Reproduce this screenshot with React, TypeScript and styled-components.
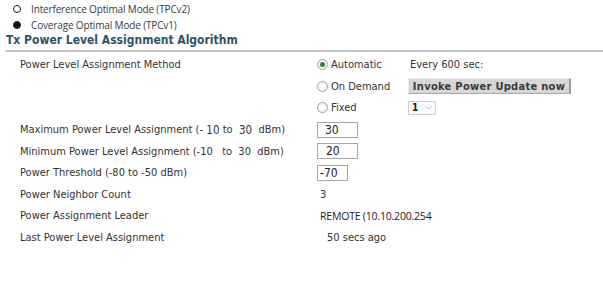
import React from "react";
import styled, { createGlobalStyle } from "styled-components";

const Global = createGlobalStyle`
  html, body { margin: 0; padding: 0; background: #fff; }
  body { font-family: Tahoma, "DejaVu Sans Condensed", "Liberation Sans", sans-serif; font-size: 11px; color: #333; }
`;

const Page = styled.div`
  width: 603px;
  height: 300px;
  overflow: hidden;
  background: #fff;
  padding-top: 1px;
  box-sizing: border-box;
`;

const ModeList = styled.div`
  display: flex;
  flex-direction: column;
  padding-left: 13px;
`;

const ModeRow = styled.div`
  display: flex;
  align-items: center;
  height: 16px;
  gap: 10px;
  font-family: "Open Sans", "Noto Sans", sans-serif;
  font-size: 10px;
  letter-spacing: -0.15px;
  color: #3a3a3a;
`;

const ModeMark = styled.span<{ $filled?: boolean }>`
  width: 8px;
  height: 8px;
  border-radius: 50%;
  box-sizing: border-box;
  border: 1.2px solid #222;
  background: ${(p) => (p.$filled ? "#111" : "#fff")};
  flex: none;
`;

const Heading = styled.div`
  margin-left: 6px;
  font-weight: bold;
  font-size: 12px;
  color: #2c5566;
  height: 15px;
  line-height: 15px;
`;

const Divider = styled.div`
  height: 2px;
  margin-left: 5px;
  background: #c9c9c9;
  margin-top: 2px;
`;

const Form = styled.div`
  display: grid;
  grid-template-columns: 297px 1fr;
  padding-left: 20px;
  padding-top: 2px;
`;

const Label = styled.div`
  height: 21.6px;
  display: flex;
  align-items: center;
  white-space: nowrap;
  color: #333;
`;

const Value = styled.div<{ $indent?: number }>`
  height: 21.6px;
  display: flex;
  align-items: center;
  white-space: nowrap;
  padding-left: ${(p) => p.$indent ?? 0}px;
  color: #333;
`;

const RadioGroup = styled.div`
  display: flex;
  align-items: center;
  width: 93px;
`;

const Radio = styled.span<{ $checked?: boolean }>`
  width: 11px;
  height: 11px;
  border-radius: 50%;
  box-sizing: border-box;
  border: 1px solid #9aa3a8;
  background: radial-gradient(circle, #fff 0%, #eceef0 100%);
  display: inline-flex;
  align-items: center;
  justify-content: center;
  margin-right: 3px;
  &::after {
    content: "";
    width: 5px;
    height: 5px;
    border-radius: 50%;
    background: ${(p) => (p.$checked ? "#2f7d3a" : "transparent")};
  }
`;

const Button = styled.div`
  margin-left: -2px;
  width: 163px;
  height: 16px;
  box-sizing: border-box;
  background: #d6d6d6;
  border-top: 1px solid #eee;
  border-left: 1px solid #eee;
  border-right: 2px solid #9a9a9a;
  border-bottom: 1px solid #a8a8a8;
  font-weight: bold;
  font-size: 11px;
  letter-spacing: 0.3px;
  white-space: nowrap;
  color: #3a3a3a;
  display: flex;
  align-items: center;
  justify-content: center;
`;

const Select = styled.div`
  margin-left: -2px;
  width: 28px;
  height: 14px;
  box-sizing: border-box;
  border: 1px solid #cfcfcf;
  display: flex;
  align-items: center;
  justify-content: space-between;
  padding: 0 3px 0 3px;
  font-weight: bold;
  font-size: 10px;
  color: #222;
  background: #fbfbfb;
`;

const Input = styled.div<{ $w: number; $pad?: number }>`
  width: ${(p) => p.$w}px;
  height: 16px;
  box-sizing: border-box;
  border: 1px solid #a6a6a6;
  display: flex;
  align-items: center;
  padding-left: ${(p) => p.$pad ?? 5}px;
  font-size: 12px;
  color: #222;
`;

const Alt = styled.span`
  font-family: "Open Sans", "Noto Sans", sans-serif;
  font-size: 10.5px;
  letter-spacing: -0.2px;
  color: #222;
`;

const Num = styled.span`
  font-size: 11.5px;
`;

export default function App() {
  return (
    <Page>
      <Global />
      <ModeList>
        <ModeRow>
          <ModeMark />
          Interference Optimal Mode (TPCv2)
        </ModeRow>
        <ModeRow>
          <ModeMark $filled />
          Coverage Optimal Mode (TPCv1)
        </ModeRow>
      </ModeList>
      <Heading>Tx Power Level Assignment Algorithm</Heading>
      <Divider />
      <Form>
        <Label>Power Level Assignment Method</Label>
        <Value>
          <RadioGroup>
            <Radio $checked />
            Automatic
          </RadioGroup>
          Every 600 sec:
        </Value>
        <Label />
        <Value>
          <RadioGroup>
            <Radio />
            On Demand
          </RadioGroup>
          <Button>Invoke Power Update now</Button>
        </Value>
        <Label />
        <Value>
          <RadioGroup>
            <Radio />
            Fixed
          </RadioGroup>
          <Select>
            1
            <svg width="7" height="5" viewBox="0 0 7 5">
              <path d="M0.5 1 L3.5 4 L6.5 1" fill="none" stroke="#bbb" strokeWidth="1" />
            </svg>
          </Select>
        </Value>
        <Label>
          Maximum Power Level Assignment (- <Num>&nbsp;10</Num>&nbsp;to&nbsp;<Num>&nbsp;30</Num>&nbsp; dBm)
        </Label>
        <Value>
          <Input $w={41} $pad={7}>30</Input>
        </Value>
        <Label>
          Minimum Power Level Assignment (-10 &nbsp; to &nbsp;30 &nbsp;dBm)
        </Label>
        <Value>
          <Input $w={41} $pad={8}>20</Input>
        </Value>
        <Label>Power Threshold (-80 to -50 dBm)</Label>
        <Value>
          <Input $w={31} $pad={2}>-70</Input>
        </Value>
        <Label>Power Neighbor Count</Label>
        <Value $indent={3}>3</Value>
        <Label>Power Assignment Leader</Label>
        <Value $indent={3}>
          <Alt>REMOTE (10.10.200.254</Alt>
        </Value>
        <Label>Last Power Level Assignment</Label>
        <Value $indent={10}>50 secs ago</Value>
      </Form>
    </Page>
  );
}
